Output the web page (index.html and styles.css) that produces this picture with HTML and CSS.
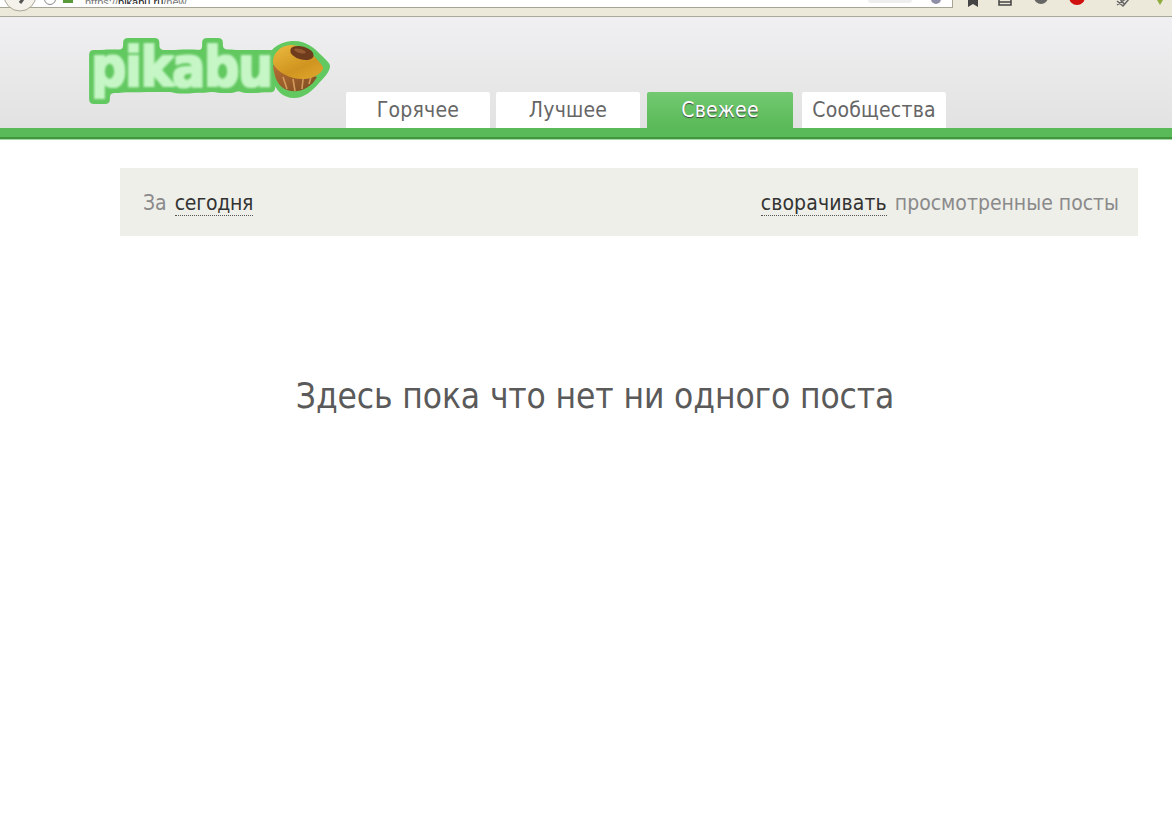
FILE: index.html
```html
<!DOCTYPE html>
<html lang="ru">
<head>
<meta charset="utf-8">
<title>Pikabu</title>
<link rel="stylesheet" href="styles.css">
</head>
<body>
<div class="chrome">
  <div class="urlbar">
    <svg class="back" width="38" height="12" viewBox="0 0 38 12"><circle cx="20" cy="-5" r="16" fill="#f4f2ea" stroke="#a8a594"/><path d="M23-1 20 3" stroke="#555" stroke-width="3" fill="none"/></svg>
    <svg class="reload" width="14" height="8" viewBox="0 0 14 8"><circle cx="7" cy="-1" r="5.5" fill="#fff" stroke="#888"/></svg>
    <span class="lock"></span>
    <span class="url">https://<b>pikabu.ru</b>/new</span>
    <span class="search-pill"></span>
    <svg class="reload-end" width="14" height="8" viewBox="0 0 14 8"><circle cx="7" cy="-1" r="5" fill="#8f8fa8"/></svg>
  </div>
  <div class="tools">
    <svg width="14" height="8" viewBox="0 0 14 8"><path d="M2-3h10v10L7 4 2 7z" fill="#444"/></svg>
    <svg class="tool-b" width="16" height="8" viewBox="0 0 16 8"><path d="M2-2v7h12v-7M2 2h12" fill="none" stroke="#444" stroke-width="1.5"/></svg>
    <svg class="tool-c" width="16" height="8" viewBox="0 0 16 8"><circle cx="8" cy="-3" r="7" fill="#666"/></svg>
    <svg class="tool-d" width="18" height="8" viewBox="0 0 18 8"><circle cx="9" cy="-3" r="8" fill="#d0100f"/></svg>
    <svg class="tool-e" width="16" height="8" viewBox="0 0 16 8"><path d="M2 1 8 6 14-1M5-1l5 6M2 5 12-2" fill="none" stroke="#666" stroke-width="1.5"/></svg>
    <svg class="tool-f" width="10" height="8" viewBox="0 0 10 8"><path d="M2 0h6L5 5z" fill="#8dae3a"/></svg>
  </div>
</div>
<header class="header">
  <div class="header-inner">
    <a class="logo" href="#">
      <svg width="244" height="74" viewBox="0 0 244 74">
        <defs>
          <linearGradient id="cap" x1="0" y1="0" x2="0.7" y2="1"><stop offset="0" stop-color="#ecbb40"/><stop offset="0.7" stop-color="#d0941f"/><stop offset="1" stop-color="#dba22a"/></linearGradient>
          <linearGradient id="cup" x1="0" y1="0" x2="1" y2="1"><stop offset="0" stop-color="#b86f35"/><stop offset="1" stop-color="#7a4a22"/></linearGradient>
          <filter id="halo" x="-8%" y="-25%" width="116%" height="150%" color-interpolation-filters="sRGB">
            <feMorphology in="SourceAlpha" operator="dilate" radius="6" result="wide"/>
            <feGaussianBlur in="wide" stdDeviation="2.2" result="wideSoft"/>
            <feComponentTransfer in="wideSoft" result="wideRound"><feFuncA type="linear" slope="6" intercept="-2.5"/></feComponentTransfer>
            <feFlood flood-color="#62c860"/>
            <feComposite in2="wideRound" operator="in" result="rim"/>
            <feMorphology in="SourceAlpha" operator="dilate" radius="1" result="fat"/>
            <feGaussianBlur in="fat" stdDeviation="0.9" result="fatSoft"/>
            <feFlood flood-color="#c6f6c6"/>
            <feComposite in2="fatSoft" operator="in" result="core"/>
            <feMerge><feMergeNode in="rim"/><feMergeNode in="core"/></feMerge>
          </filter>
          <filter id="soft" x="-5%" y="-5%" width="110%" height="110%"><feGaussianBlur stdDeviation="0.5"/></filter>
        </defs>
        <path class="muffin-rim" d="M180 28C181 18 190 9 205 8 218 7 228 15 233 21 238 26 243 30 243 33 243 38 238 44 232 50 226 57 218 65 207 65 196 65 188 57 185 46 182 40 180 34 180 28Z"/>
        <text class="logo-text" x="4" y="53" filter="url(#halo)">pikabu</text>
        <g filter="url(#soft)">
          <path d="M186 32C187 44 191 54 200 57 212 61 224 55 230 44Z" fill="url(#cup)"/>
          <path d="M196 44 200 56M206 46 208 58M216 46 215 56M224 44 222 51" stroke="#d49a5c" stroke-width="1.6" fill="none"/>
          <path d="M186 30C185 22 192 13 203 12 215 11 228 22 236 34 237 39 228 45 218 46 205 47 190 40 186 30Z" fill="url(#cap)"/>
          <ellipse cx="215" cy="20" rx="12" ry="6.5" transform="rotate(15 215 20)" fill="#6e3a1c"/>
          <ellipse cx="213" cy="18" rx="6" ry="2" transform="rotate(15 213 18)" fill="#945a32"/>
        </g>
      </svg>
    </a>
    <nav class="tabs">
      <a class="tab tab-hot" href="#">Горячее</a>
      <a class="tab tab-best" href="#">Лучшее</a>
      <a class="tab tab-new" href="#">Свежее</a>
      <a class="tab tab-comm" href="#">Сообщества</a>
    </nav>
  </div>
</header>
<div class="greenbar"></div>
<main class="main">
  <div class="filter">
    <div>За <span class="dotted dotted-period">сегодня</span></div>
    <div><span class="dotted dotted-fold">сворачивать</span> просмотренные посты</div>
  </div>
  <h1 class="empty">Здесь пока что нет ни одного поста</h1>
</main>
</body>
</html>
```
FILE: styles.css
```css
* { box-sizing: border-box; }
html, body { margin: 0; padding: 0; background: #fff; }
body { font-family: "DejaVu Sans Condensed", "Open Sans", "Liberation Sans", sans-serif; height: 814px; overflow: hidden; }
a { text-decoration: none; color: inherit; }

.chrome { height: 17px; background: #ece9db; border-bottom: 1px solid #aaa99c; display: flex; align-items: flex-start; }
.urlbar { width: 953px; height: 8px; background: #fff; border-bottom: 1px solid #a6a595; border-right: 1px solid #a6a595; display: flex; align-items: flex-start; position: relative; overflow: visible; }
.back { flex: none; overflow: visible; }
.reload { flex: none; margin-left: 5px; }
.lock { flex: none; width: 10px; height: 3px; background: #5a9a3a; margin-left: 6px; }
.url { font: 11px/4px "Liberation Sans", sans-serif; color: #777; margin-left: 12px; height: 4px; overflow: hidden; }
.url b { font-weight: 400; color: #111; }
.search-pill { width: 44px; height: 3px; background: #eee; border-radius: 0 0 8px 8px; margin-left: auto; }
.reload-end { flex: none; margin: 0 9px 0 17px; }
.tools { flex: 1; display: flex; align-items: flex-start; padding-left: 13px; }
.tool-b { margin-left: 17px; }
.tool-c { margin-left: 20px; }
.tool-d { margin-left: 19px; }
.tool-e { margin-left: 29px; }
.tool-f { margin-left: 24px; }

.header { height: 111px; background: linear-gradient(#f0f0f2, #e2e2e2); }
.header-inner { height: 100%; display: flex; align-items: flex-end; padding-left: 87px; }
.logo { display: block; width: 244px; height: 74px; margin-bottom: 21px; flex: none; }
.muffin-rim { fill: #62c860; }
.logo-text { font: 700 55px "DejaVu Sans Condensed", "DejaVu Sans", sans-serif; fill: #c6f6c6; letter-spacing: -1.4px; }

.tabs { display: flex; margin-left: 15px; }
.tab { height: 36px; background: #fff; color: #666; font-size: 21px; letter-spacing: 0.2px; line-height: 37px; text-align: center; width: 144px; border-radius: 2px 2px 0 0; margin-right: 6px; }
.tab-best { margin-right: 7px; }
.tab-new { width: 146px; margin-right: 9px; background: linear-gradient(#72c970, #5ab958); color: #fff; text-shadow: 0 1px 1px #444; }

.greenbar { height: 11px; background: #5ab958; border-bottom: 2px solid #3f963d; box-shadow: 0 1px 0 #a9d8a8; }

.main { padding: 29px 0 0 120px; }
.filter { width: 1018px; height: 68px; background: #efefea; display: flex; justify-content: space-between; align-items: center; padding: 2px 19px 0 23px; font-size: 21px; color: #8a8a8a; }
.dotted { color: #333; border-bottom: 1px dotted #555; }
.dotted-period { margin-left: 2px; letter-spacing: -0.25px; }
.dotted-fold { margin-right: 2px; letter-spacing: 0.1px; }
.empty { width: 950px; margin: 135px 0 0; text-align: center; font-size: 35px; letter-spacing: -0.12px; font-weight: 400; line-height: 50px; color: #5a5a5a; }
```
